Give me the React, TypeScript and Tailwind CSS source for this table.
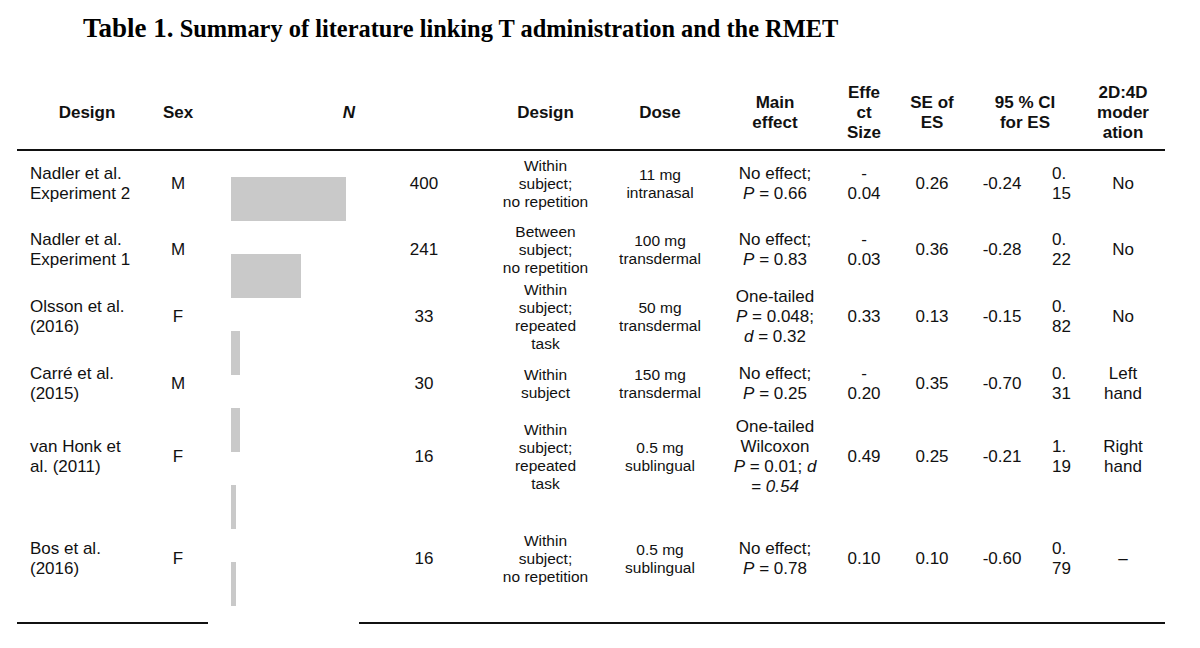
import React from "react";

const cols =
  "grid grid-cols-[140px_42px_158px_134px_109px_120px_110px_68px_68px_72px_46px_78px]";

type Row = {
  study: string[];
  sex: string;
  n: string;
  bar: number;
  design: string[];
  dose: string[];
  main: React.ReactNode[];
  es: string[];
  se: string;
  lo: string;
  hi: string[];
  mod: string[];
};

const I = ({ children }: { children: React.ReactNode }) => <i>{children}</i>;

const rows: Row[] = [
  {
    study: ["Nadler et al.", "Experiment 2"],
    sex: "M",
    n: "400",
    bar: 115,
    design: ["Within", "subject;", "no repetition"],
    dose: ["11 mg", "intranasal"],
    main: ["No effect;", <><I>P</I> = 0.66</>],
    es: ["-", "0.04"],
    se: "0.26",
    lo: "-0.24",
    hi: ["0.", "15"],
    mod: ["No"],
  },
  {
    study: ["Nadler et al.", "Experiment 1"],
    sex: "M",
    n: "241",
    bar: 70,
    design: ["Between", "subject;", "no repetition"],
    dose: ["100 mg", "transdermal"],
    main: ["No effect;", <><I>P</I> = 0.83</>],
    es: ["-", "0.03"],
    se: "0.36",
    lo: "-0.28",
    hi: ["0.", "22"],
    mod: ["No"],
  },
  {
    study: ["Olsson et al.", "(2016)"],
    sex: "F",
    n: "33",
    bar: 9,
    design: ["Within", "subject;", "repeated", "task"],
    dose: ["50 mg", "transdermal"],
    main: ["One-tailed", <><I>P</I> = 0.048;</>, <><I>d</I> = 0.32</>],
    es: ["0.33"],
    se: "0.13",
    lo: "-0.15",
    hi: ["0.", "82"],
    mod: ["No"],
  },
  {
    study: ["Carré et al.", "(2015)"],
    sex: "M",
    n: "30",
    bar: 9,
    design: ["Within", "subject"],
    dose: ["150 mg", "transdermal"],
    main: ["No effect;", <><I>P</I> = 0.25</>],
    es: ["-", "0.20"],
    se: "0.35",
    lo: "-0.70",
    hi: ["0.", "31"],
    mod: ["Left", "hand"],
  },
  {
    study: ["van Honk et", "al. (2011)"],
    sex: "F",
    n: "16",
    bar: 5,
    design: ["Within", "subject;", "repeated", "task"],
    dose: ["0.5 mg", "sublingual"],
    main: [
      "One-tailed",
      "Wilcoxon",
      <><I>P</I> = 0.01; <I>d</I></>,
      <I>= 0.54</I>,
    ],
    es: ["0.49"],
    se: "0.25",
    lo: "-0.21",
    hi: ["1.", "19"],
    mod: ["Right", "hand"],
  },
  {
    study: ["Bos et al.", "(2016)"],
    sex: "F",
    n: "16",
    bar: 5,
    design: ["Within", "subject;", "no repetition"],
    dose: ["0.5 mg", "sublingual"],
    main: ["No effect;", <><I>P</I> = 0.78</>],
    es: ["0.10"],
    se: "0.10",
    lo: "-0.60",
    hi: ["0.", "79"],
    mod: ["–"],
  },
];

const Lines = ({ items }: { items: React.ReactNode[] }) => (
  <div className="flex flex-col items-center whitespace-nowrap">
    {items.map((t, i) => (
      <span key={i}>{t}</span>
    ))}
  </div>
);

const cell = "flex items-center justify-center whitespace-nowrap";

export default function App() {
  return (
    <div className="w-[1200px] h-[648px] bg-white overflow-hidden text-[#111]">
      <div
        className="pl-[83px] pt-[13px] leading-[30px] font-bold text-black"
        style={{ fontFamily: '"Liberation Serif", "Times New Roman", serif' }}
      >
        <span className="text-[27px]">Table 1.</span>
        <span className="text-[24.4px]"> Summary of literature linking T administration and the RMET</span>
      </div>

      <div
        className="ml-[17px] mt-[30px] w-[1148px]"
        style={{ fontFamily: '"Liberation Sans", Arial, sans-serif' }}
      >
        {/* header */}
        <div className={`${cols} h-[74px] text-[17px] leading-[20px] font-bold border-b-2 border-[#111]`}>
          <div className={cell}>Design</div>
          <div className={cell}>Sex</div>
          <div className={`${cell} col-span-2 pl-[8px]`}>
            <i>N</i>
          </div>
          <div className={cell}>Design</div>
          <div className={cell}>Dose</div>
          <div className={cell}>
            <Lines items={["Main", "effect"]} />
          </div>
          <div className={cell}>
            <Lines items={["Effe", "ct", "Size"]} />
          </div>
          <div className={cell}>
            <Lines items={["SE of", "ES"]} />
          </div>
          <div className={`${cell} col-span-2`}>
            <Lines items={["95 % CI", "for ES"]} />
          </div>
          <div className={cell}>
            <Lines items={["2D:4D", "moder", "ation"]} />
          </div>
        </div>

        {/* body */}
        <div
          className={`${cols} grid-rows-[66px_66px_67px_68px_78px_126px] text-[17px] leading-[20px]`}
        >
          <div className="col-start-3 row-start-1 row-span-6 flex flex-col gap-[33px] pt-[26px] pl-[32px] bg-white">
            {rows.map((r, i) => (
              <div key={i} className="h-[44px] bg-[#c9c9c9]" style={{ width: r.bar }} />
            ))}
          </div>
          {rows.map((r, i) => (
            <React.Fragment key={i}>
              <div className="flex flex-col justify-center pl-[13px] whitespace-nowrap">
                {r.study.map((s, j) => (
                  <span key={j}>{s}</span>
                ))}
              </div>
              <div className={cell}>{r.sex}</div>
              <div className={cell}>{r.n}</div>
              <div className={`${cell} text-[15.5px] leading-[18px]`}>
                <Lines items={r.design} />
              </div>
              <div className={`${cell} text-[15.5px] leading-[18px]`}>
                <Lines items={r.dose} />
              </div>
              <div className={cell}>
                <Lines items={r.main} />
              </div>
              <div className={cell}>
                <Lines items={r.es} />
              </div>
              <div className={cell}>{r.se}</div>
              <div className={cell}>{r.lo}</div>
              <div className="flex flex-col justify-center items-start pl-[14px] whitespace-nowrap">
                {r.hi.map((s, j) => (
                  <span key={j}>{s}</span>
                ))}
              </div>
              <div className={cell}>
                <Lines items={r.mod} />
              </div>
            </React.Fragment>
          ))}
        </div>

        {/* bottom rules */}
        <div className="flex">
          <div className="w-[191px] h-[2px] bg-[#111]" />
          <div className="ml-[151px] flex-1 h-[2px] bg-[#111]" />
        </div>
      </div>
    </div>
  );
}
